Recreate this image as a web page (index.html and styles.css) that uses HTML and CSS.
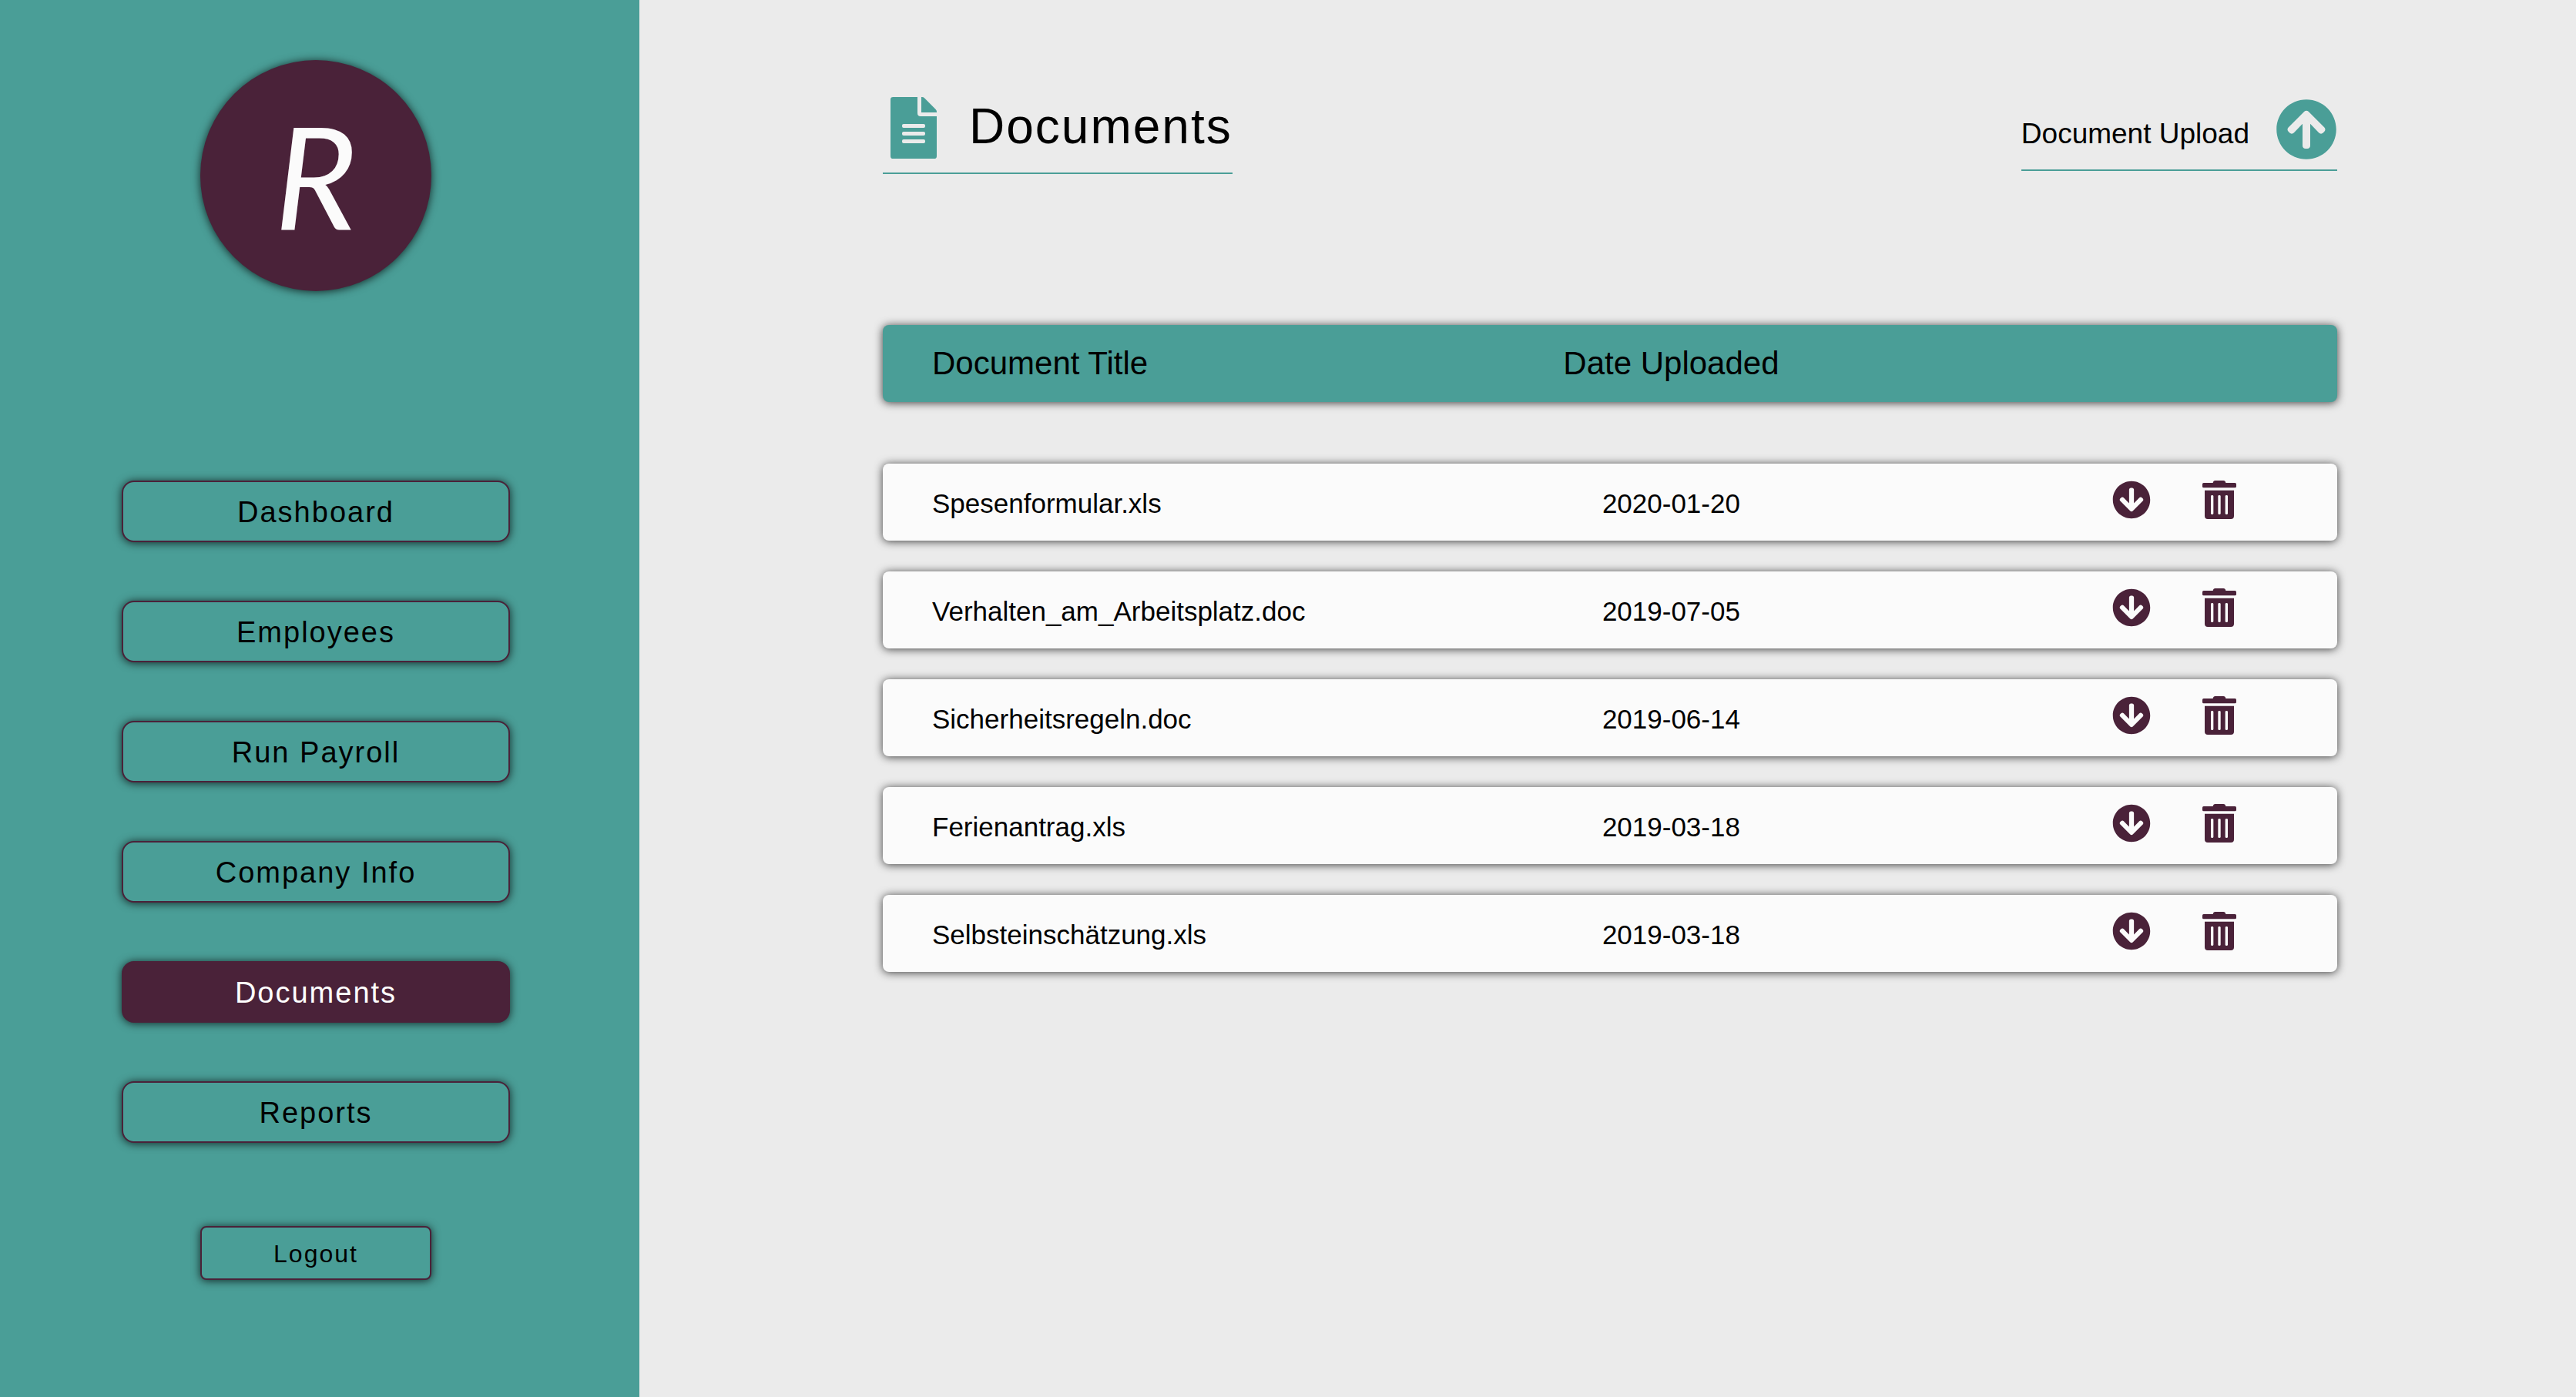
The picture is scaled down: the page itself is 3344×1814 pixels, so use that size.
FILE: index.html
```html
<!DOCTYPE html>
<html lang="en">
<head>
<meta charset="utf-8">
<meta name="viewport" content="width=device-width, initial-scale=1">
<title>Documents</title>
<link rel="stylesheet" href="styles.css">
</head>
<body>
<svg class="sprite" aria-hidden="true">
  <symbol id="icon-arrow" viewBox="0 0 512 512">
    <path d="M8 256C8 119 119 8 256 8s248 111 248 248-111 248-248 248S8 393 8 256zm143.6 28.9l72.4-75.5V392c0 13.3 10.7 24 24 24h16c13.3 0 24-10.7 24-24V209.4l72.4 75.5c9.3 9.7 24.8 9.9 34.3.4l10.9-11c9.4-9.4 9.4-24.6 0-33.9L273 107.7c-9.4-9.4-24.6-9.4-33.9 0L106.3 240.4c-9.4 9.4-9.4 24.6 0 33.9l10.9 11c9.6 9.5 25.1 9.3 34.4-.4z"/>
  </symbol>
  <symbol id="icon-trash" viewBox="0 0 132 150">
    <path d="M5 9H41C42 3 45 0 50 0H82C87 0 90 3 91 9H127Q132 9 132 14V23Q132 28 127 28H5Q0 28 0 23V14Q0 9 5 9Z"/>
    <path fill-rule="evenodd" d="M9 38H123V138Q123 150 111 150H21Q9 150 9 138ZM33 61V128Q33 132 38 132T43 128V61Q43 57 38 57T33 61ZM61 61V128Q61 132 66 132T71 128V61Q71 57 66 57T61 61ZM89 61V128Q89 132 94 132T99 128V61Q99 57 94 57T89 61Z"/>
  </symbol>
</svg>
<div class="app">
  <aside class="sidebar">
    <div class="logo">R</div>
    <nav class="nav">
      <a class="nav-link" href="#">Dashboard</a>
      <a class="nav-link" href="#">Employees</a>
      <a class="nav-link" href="#">Run Payroll</a>
      <a class="nav-link" href="#">Company Info</a>
      <a class="nav-link active" href="#" aria-current="page">Documents</a>
      <a class="nav-link" href="#">Reports</a>
    </nav>
    <button class="logout" type="button">Logout</button>
  </aside>
  <main class="main">
    <header class="page-header">
      <div class="page-title">
        <svg class="file-icon" viewBox="0 0 180 240" aria-hidden="true">
          <path fill-rule="evenodd" d="M10 0H105V63Q105 75 117 75H180V230Q180 240 170 240H10Q0 240 0 230V10Q0 0 10 0ZM51 105Q45 105 45 111V114Q45 120 51 120H129Q135 120 135 114V111Q135 105 129 105ZM51 135Q45 135 45 141V144Q45 150 51 150H129Q135 150 135 144V141Q135 135 129 135ZM51 165Q45 165 45 171V174Q45 180 51 180H129Q135 180 135 174V171Q135 165 129 165Z"/>
          <path d="M120 0H123Q128 0 132 4L176 48Q180 52 180 57V60H120Z"/>
        </svg>
        <h1>Documents</h1>
      </div>
      <button class="upload" type="button">
        <span>Document Upload</span>
        <svg class="upload-icon" aria-hidden="true"><use href="#icon-arrow"/></svg>
      </button>
    </header>
    <table class="documents">
      <thead>
        <tr><th scope="col">Document Title</th><th class="date" scope="col">Date Uploaded</th><td></td></tr>
      </thead>
      <tbody>
        <tr>
          <td>Spesenformular.xls</td><td class="date">2020-01-20</td>
          <td class="actions">
            <button type="button" aria-label="Download"><svg class="download-icon"><use href="#icon-arrow"/></svg></button>
            <button type="button" aria-label="Delete"><svg class="trash-icon"><use href="#icon-trash"/></svg></button>
          </td>
        </tr>
        <tr>
          <td>Verhalten_am_Arbeitsplatz.doc</td><td class="date">2019-07-05</td>
          <td class="actions">
            <button type="button" aria-label="Download"><svg class="download-icon"><use href="#icon-arrow"/></svg></button>
            <button type="button" aria-label="Delete"><svg class="trash-icon"><use href="#icon-trash"/></svg></button>
          </td>
        </tr>
        <tr>
          <td>Sicherheitsregeln.doc</td><td class="date">2019-06-14</td>
          <td class="actions">
            <button type="button" aria-label="Download"><svg class="download-icon"><use href="#icon-arrow"/></svg></button>
            <button type="button" aria-label="Delete"><svg class="trash-icon"><use href="#icon-trash"/></svg></button>
          </td>
        </tr>
        <tr>
          <td>Ferienantrag.xls</td><td class="date">2019-03-18</td>
          <td class="actions">
            <button type="button" aria-label="Download"><svg class="download-icon"><use href="#icon-arrow"/></svg></button>
            <button type="button" aria-label="Delete"><svg class="trash-icon"><use href="#icon-trash"/></svg></button>
          </td>
        </tr>
        <tr>
          <td>Selbsteinschätzung.xls</td><td class="date">2019-03-18</td>
          <td class="actions">
            <button type="button" aria-label="Download"><svg class="download-icon"><use href="#icon-arrow"/></svg></button>
            <button type="button" aria-label="Delete"><svg class="trash-icon"><use href="#icon-trash"/></svg></button>
          </td>
        </tr>
      </tbody>
    </table>
  </main>
</div>
</body>
</html>
```

FILE: styles.css
```css
:root {
  --teal: #4a9e97;
  --plum: #4a2239;
  --page: #ebebeb;
  --card: #fbfbfb;
  --shadow: 0 1px 12px rgba(0, 0, 0, 0.75);
}

* {
  box-sizing: border-box;
}

body {
  margin: 0;
  background: var(--page);
  color: #000;
  font-family: "Liberation Sans", Helvetica, Arial, sans-serif;
}

button {
  margin: 0;
  padding: 0;
  border: 0;
  background: none;
  color: inherit;
  font: inherit;
  cursor: pointer;
}

svg {
  display: block;
  fill: currentColor;
}

.sprite {
  display: none;
}

.app {
  display: flex;
  min-height: 100vh;
}

/* Sidebar */
.sidebar {
  display: flex;
  flex: 0 0 830px;
  flex-direction: column;
  align-items: center;
  padding: 78px 10px 78px 0;
  background: var(--teal);
}

.logo {
  width: 300px;
  height: 300px;
  border-radius: 50%;
  background: var(--plum);
  box-shadow: var(--shadow);
  color: var(--card);
  font-family: Lato, sans-serif;
  font-size: 184px;
  font-style: italic;
  line-height: 300px;
  text-align: center;
}

.nav {
  display: flex;
  flex-direction: column;
  gap: 76px;
  width: 504px;
  margin: 246px 0 108px;
}

.nav-link,
.logout {
  padding-top: 2px;
  border: 2px solid var(--plum);
  box-shadow: var(--shadow);
  background: var(--teal);
  letter-spacing: 2px;
  text-align: center;
}

.nav-link {
  border-radius: 16px;
  color: inherit;
  font-size: 38px;
  line-height: 74px;
  text-decoration: none;
}

.nav-link.active {
  background: var(--plum);
  color: #fff;
}

.logout {
  width: 300px;
  border-radius: 8px;
  font-size: 32px;
  line-height: 64px;
}

/* Page header */
.main {
  flex: 1;
  padding: 126px 310px 126px 316px;
}

.page-header {
  display: flex;
  align-items: flex-start;
  justify-content: space-between;
  margin-bottom: 196px;
}

.page-title {
  display: flex;
  gap: 42px;
  padding: 0 0 18px 10px;
  border-bottom: 2px solid var(--teal);
}

.file-icon {
  width: 60px;
  height: 80px;
  color: var(--teal);
}

h1 {
  margin: 0;
  font-size: 64px;
  font-weight: 400;
  line-height: 76px;
  letter-spacing: 2px;
}

.upload {
  display: flex;
  align-items: center;
  gap: 34px;
  padding: 2px 0 12px;
  border-bottom: 2px solid var(--teal);
  font-size: 37px;
}

.upload span {
  padding-top: 12px;
}

.upload-icon {
  width: 80px;
  height: 80px;
  color: var(--teal);
}

/* Documents table */
.documents {
  display: block;
}

thead,
tbody {
  display: grid;
  gap: 40px;
}

thead {
  margin-bottom: 80px;
}

tr {
  display: grid;
  grid-template-columns: 390fr 180fr 277fr;
  align-items: center;
  height: 100px;
  padding: 0 131px 0 64px;
  border-radius: 8px;
  background: var(--card);
  box-shadow: var(--shadow);
}

thead tr {
  background: var(--teal);
}

th {
  padding: 0;
  font-size: 42px;
  font-weight: 400;
  text-align: left;
  white-space: nowrap;
}

td {
  padding: 4px 0 0;
  font-size: 35px;
}

.date {
  text-align: center;
}

.actions {
  display: flex;
  align-items: center;
  justify-content: flex-end;
  gap: 67px;
  padding: 0 0 6px;
  color: var(--plum);
}

.download-icon {
  width: 50px;
  height: 50px;
  transform: rotate(180deg);
}

.trash-icon {
  width: 44px;
  height: 50px;
}
```
